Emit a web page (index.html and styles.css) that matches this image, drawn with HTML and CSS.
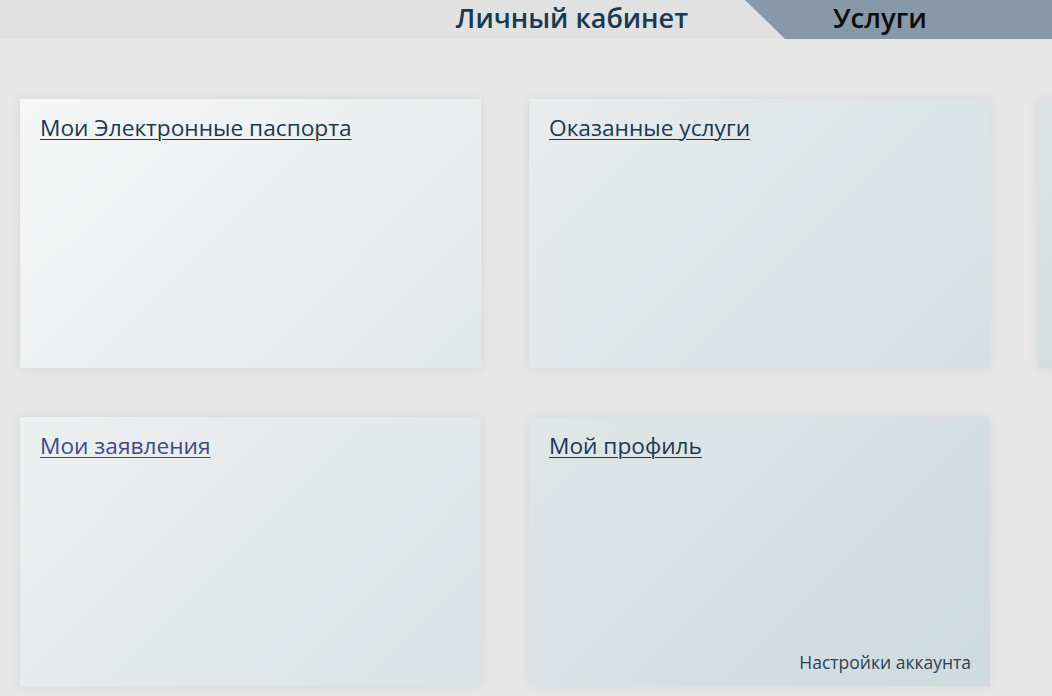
FILE: index.html
```html
<!DOCTYPE html>
<html lang="ru">
<head>
<meta charset="utf-8">
<title>Личный кабинет</title>
<link rel="stylesheet" href="styles.css">
</head>
<body>
<header class="topbar">
  <a class="topbar-link" href="#">Личный кабинет</a>
  <a class="topbar-tab" href="#">Услуги</a>
</header>
<main class="dashboard">
  <section class="tile">
    <a class="tile-title" href="#">Мои Электронные паспорта</a>
  </section>
  <section class="tile">
    <a class="tile-title" href="#">Оказанные услуги</a>
  </section>
  <section class="tile"></section>
  <section class="tile">
    <a class="tile-title tile-title--visited" href="#">Мои заявления</a>
  </section>
  <section class="tile">
    <a class="tile-title" href="#">Мой профиль</a>
    <a class="tile-footer" href="#">Настройки аккаунта</a>
  </section>
</main>
</body>
</html>
```
FILE: styles.css
```css
html, body {
  margin: 0;
  padding: 0;
}

body {
  background: #e7e7e7;
  font-family: "Open Sans", "Noto Sans", sans-serif;
  overflow: hidden;
  height: 696px;
}

.topbar {
  display: flex;
  justify-content: flex-end;
  align-items: stretch;
  height: 39px;
  background: #e1e1e1;
}

.topbar-link {
  padding-right: 57px;
  font-size: 27px;
  font-weight: 600;
  line-height: 35px;
  color: #173a52;
  text-decoration: none;
}

.topbar-tab {
  width: 307px;
  padding-left: 88px;
  box-sizing: border-box;
  background: #8799a8;
  clip-path: polygon(0 0, 100% 0, 100% 100%, 40px 100%);
  font-size: 27.5px;
  font-weight: 600;
  line-height: 35px;
  color: #0d0d0d;
  text-decoration: none;
}

.dashboard {
  display: grid;
  grid-template-columns: repeat(3, 461px);
  grid-auto-rows: 269px;
  column-gap: 48px;
  row-gap: 49px;
  padding: 60px 0 0 20px;
  width: max-content;
}

.tile {
  display: flex;
  flex-direction: column;
  align-items: flex-start;
  padding: 13px 19px 13px 20px;
  box-sizing: border-box;
  background: linear-gradient(135deg, #f9f9f9 0%, #e4e9eb 45%, #cbd9de 100%);
  background-attachment: fixed;
  box-shadow: 0 0 12px rgba(0, 0, 0, 0.07);
}

.tile-title {
  font-size: 22.7px;
  line-height: 31px;
  color: #1b3850;
  text-decoration: underline;
  text-underline-offset: 3px;
  text-decoration-thickness: 1px;
}

.tile-title--visited {
  color: #3b4b8c;
}

.tile-footer {
  margin-top: auto;
  align-self: flex-end;
  font-size: 17.5px;
  line-height: 22px;
  color: #2b4054;
  text-decoration: none;
}
```
